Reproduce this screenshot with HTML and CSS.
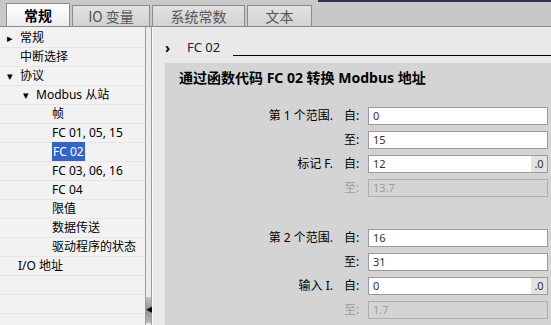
FILE: index.html
```html
<!DOCTYPE html>
<html>
<head>
    <title>FC 02</title>
    <link rel="stylesheet" href="styles.css">
</head>
<body>
    <div class="tabbar">
        <div class="tab active">常规</div>
        <div class="tab">IO 变量</div>
        <div class="tab">系统常数</div>
        <div class="tab">文本</div>
        <div class="topline"></div>
    </div>

    <div class="main">
        <div class="tree">
            <div class="row lvl0"><span class="arrow">&#9656;</span>常规</div>
            <div class="row lvl0">中断选择</div>
            <div class="row lvl0"><span class="arrow">&#9662;</span>协议</div>
            <div class="row lvl1"><span class="arrow">&#9662;</span>Modbus 从站</div>
            <div class="row lvl2">帧</div>
            <div class="row lvl2">FC 01, 05, 15</div>
            <div class="row lvl2"><span class="selected">FC 02</span></div>
            <div class="row lvl2">FC 03, 06, 16</div>
            <div class="row lvl2">FC 04</div>
            <div class="row lvl2">限值</div>
            <div class="row lvl2">数据传送</div>
            <div class="row lvl2">驱动程序的状态</div>
            <div class="row io">I/O 地址</div>
            <div class="row"></div>
            <div class="row"></div>
        </div>
        <div class="scroll">
            <div class="scroll-thumb">&#9664;</div>
        </div>

        <div class="content">
            <div class="heading">
                <span class="chev">&#8250;</span>
                <span class="heading-text">FC 02</span>
                <span class="heading-line"></span>
            </div>
            <div class="section">
                <div class="section-title">通过函数代码 FC 02 转换 Modbus 地址</div>

                <div class="form">
                    <div class="label">第 1 个范围.</div><div class="sub">自:</div>
                    <div class="field">0</div>
                    <div class="label"></div><div class="sub">至:</div>
                    <div class="field">15</div>
                    <div class="label">标记 F.</div><div class="sub">自:</div>
                    <div class="field">12<span class="suffix">.0</span></div>
                    <div class="label"></div><div class="sub off">至:</div>
                    <div class="field off">13.7</div>
                </div>

                <div class="form second">
                    <div class="label">第 2 个范围.</div><div class="sub">自:</div>
                    <div class="field">16</div>
                    <div class="label"></div><div class="sub">至:</div>
                    <div class="field">31</div>
                    <div class="label">输入 I.</div><div class="sub">自:</div>
                    <div class="field">0<span class="suffix">.0</span></div>
                    <div class="label"></div><div class="sub off">至:</div>
                    <div class="field off">1.7</div>
                </div>
            </div>
        </div>
    </div>
</body>
</html>
```

FILE: styles.css
```css
body {
    margin: 0;
    width: 551px;
    height: 325px;
    overflow: hidden;
    font-family: "Noto Sans", "Noto Sans CJK SC", sans-serif;
    font-size: 12px;
    color: #000;
    background: #e9e9e9;
}

/* tab strip */
.tabbar {
    position: relative;
    display: flex;
    align-items: flex-end;
    height: 26px;
    padding-left: 6px;
    background: #c8c8c8;
    border-bottom: 1px solid #8a8a8a;
}

.topline {
    position: absolute;
    top: 0;
    left: 318px;
    right: 0;
    height: 2px;
    background: #2c3550;
}

.tab {
    box-sizing: border-box;
    height: 21px;
    line-height: 20px;
    margin-right: 2px;
    text-align: center;
    white-space: nowrap;
    font-family: "Noto Sans CJK SC", sans-serif;
    font-size: 14px;
    color: #555;
    background: linear-gradient(#e2e2e2, #d2d2d2);
    border: 1px solid #8c8c8c;
    border-bottom: none;
}

.tab.active {
    height: 23px;
    line-height: 22px;
    font-weight: bold;
    color: #000;
    background: linear-gradient(#ffffff, #eeeeee);
}

.tab:nth-child(1) { width: 64px; }
.tab:nth-child(2) { width: 78px; }
.tab:nth-child(3) { width: 93px; }
.tab:nth-child(4) { width: 65px; }

/* layout */
.main {
    display: flex;
    height: 298px;
}

.tree {
    width: 145px;
    padding-top: 2px;
    background: #f2f2f2;
}

.row {
    height: 18px;
    line-height: 18px;
    border-bottom: 1px solid #e6e6e6;
    white-space: nowrap;
}

.lvl0 { padding-left: 20px; }
.lvl1 { padding-left: 36px; }
.lvl2 { padding-left: 52px; }
.io { padding-left: 18px; }

.arrow {
    display: inline-block;
    width: 13px;
    margin-left: -13px;
    font-size: 11px;
}

.selected {
    padding: 1px 1px;
    color: #fff;
    background: #3565c4;
}

.scroll {
    display: flex;
    flex-direction: column;
    justify-content: flex-end;
    width: 5px;
    background: #ececec;
    border-left: 1px solid #9c9c9c;
    border-right: 1px solid #9c9c9c;
}

.scroll-thumb {
    height: 26px;
    margin-bottom: 2px;
    font-size: 7px;
    line-height: 26px;
    text-align: center;
    color: #000;
    background: linear-gradient(#c4c4c4, #8e8e8e, #b8b8b8);
}

.content {
    flex: 1;
    padding-left: 12px;
    border-left: 1px solid #fafafa;
}

.heading {
    display: flex;
    align-items: center;
    height: 32px;
    padding-top: 4px;
}

.chev {
    width: 22px;
    font-size: 14px;
    font-weight: bold;
}

.heading-text {
    font-size: 13px;
    color: #222;
}

.heading-line {
    flex: 1;
    height: 1px;
    margin: 16px 0 0 13px;
    background: #000;
}

.section {
    height: 262px;
    padding-left: 14px;
    background: #d4d4d4;
}

.section-title {
    padding-top: 5px;
    font-size: 14px;
    font-weight: bold;
    line-height: 20px;
}

.form {
    display: grid;
    grid-template-columns: 156px 33px 180px;
    grid-auto-rows: 18px;
    row-gap: 6px;
    margin-top: 19px;
    line-height: 18px;
}

.form.second {
    margin-top: 32px;
}

.label {
    text-align: right;
    padding-right: 2px;
}

.sub {
    padding-left: 9px;
}

.field {
    position: relative;
    box-sizing: border-box;
    padding-left: 4px;
    line-height: 16px;
    font-size: 11px;
    color: #333;
    background: #fff;
    border: 1px solid #9a9a9a;
}

.suffix {
    position: absolute;
    top: 0;
    right: 0;
    width: 16px;
    height: 16px;
    text-align: center;
    background: #e2e2e2;
}

.sub.off {
    color: #9c9c9c;
}

.field.off {
    color: #9c9c9c;
    background: #d4d4d4;
    border-color: #b0b0b0;
}
```
